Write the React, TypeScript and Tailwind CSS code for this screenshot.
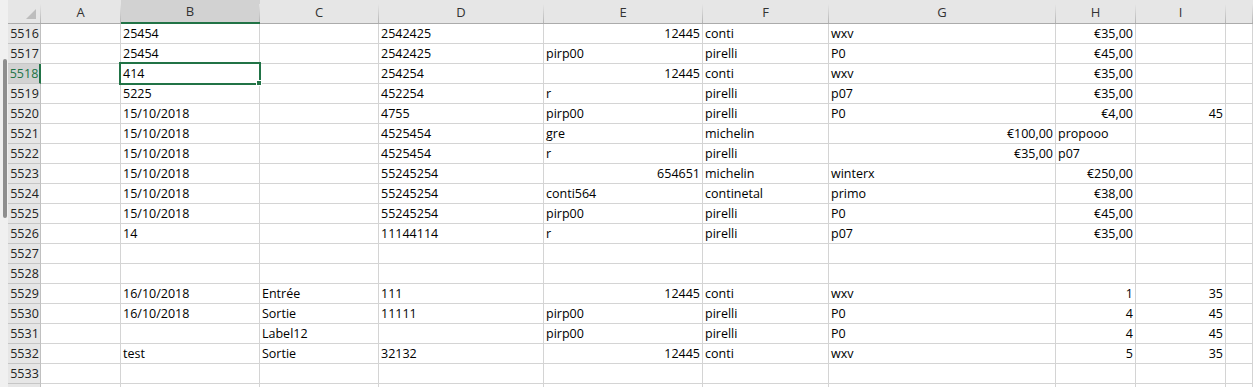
import React from "react";

type Cell = string | { v: string; r: true } | null;

const R = (v: string): Cell => ({ v, r: true });

const cols = ["A", "B", "C", "D", "E", "F", "G", "H", "I", ""];
const widths = ["w-[80px]", "w-[139px]", "w-[119px]", "w-[165px]", "w-[159px]", "w-[126px]", "w-[227px]", "w-[80px]", "w-[90px]", "flex-1"];

const rows: { n: number | null; c: Cell[] }[] = [
  { n: 5516, c: [null, "25454", null, "2542425", R("12445"), "conti", "wxv", R("€35,00"), null, null] },
  { n: 5517, c: [null, "25454", null, "2542425", "pirp00", "pirelli", "P0", R("€45,00"), null, null] },
  { n: 5518, c: [null, "414", null, "254254", R("12445"), "conti", "wxv", R("€35,00"), null, null] },
  { n: 5519, c: [null, "5225", null, "452254", "r", "pirelli", "p07", R("€35,00"), null, null] },
  { n: 5520, c: [null, "15/10/2018", null, "4755", "pirp00", "pirelli", "P0", R("€4,00"), R("45"), null] },
  { n: 5521, c: [null, "15/10/2018", null, "4525454", "gre", "michelin", R("€100,00"), "propooo", null, null] },
  { n: 5522, c: [null, "15/10/2018", null, "4525454", "r", "pirelli", R("€35,00"), "p07", null, null] },
  { n: 5523, c: [null, "15/10/2018", null, "55245254", R("654651"), "michelin", "winterx", R("€250,00"), null, null] },
  { n: 5524, c: [null, "15/10/2018", null, "55245254", "conti564", "continetal", "primo", R("€38,00"), null, null] },
  { n: 5525, c: [null, "15/10/2018", null, "55245254", "pirp00", "pirelli", "P0", R("€45,00"), null, null] },
  { n: 5526, c: [null, "14", null, "11144114", "r", "pirelli", "p07", R("€35,00"), null, null] },
  { n: 5527, c: [null, null, null, null, null, null, null, null, null, null] },
  { n: 5528, c: [null, null, null, null, null, null, null, null, null, null] },
  { n: 5529, c: [null, "16/10/2018", "Entrée", "111", R("12445"), "conti", "wxv", R("1"), R("35"), null] },
  { n: 5530, c: [null, "16/10/2018", "Sortie", "11111", "pirp00", "pirelli", "P0", R("4"), R("45"), null] },
  { n: 5531, c: [null, null, "Label12", null, "pirp00", "pirelli", "P0", R("4"), R("45"), null] },
  { n: 5532, c: [null, "test", "Sortie", "32132", R("12445"), "conti", "wxv", R("5"), R("35"), null] },
  { n: 5533, c: [null, null, null, null, null, null, null, null, null, null] },
  { n: null, c: [null, null, null, null, null, null, null, null, null, null] },
];

export default function App() {
  return (
    <div
      className="flex w-[1253px] h-[387px] overflow-hidden bg-white text-black"
      style={{ fontFamily: '"Open Sans", "Noto Sans", sans-serif' }}
    >
      {/* left strip with scroll thumb */}
      <div className="w-[8px] shrink-0 bg-[#f0f0f0] pt-[59px]">
        <div className="ml-[3px] h-[159px] w-[4px] rounded-full bg-[#8e8e8e]" />
      </div>

      <div className="relative flex-1 flex flex-col">
        {/* header row */}
        <div className="flex h-[24px] shrink-0 bg-[#e6e6e6]">
          <div className="w-[33px] shrink-0 flex border-b border-[#ababab]">
            <div className="flex-1 flex items-end justify-end pb-[3px] pr-[3px]">
              <svg width="11" height="11" viewBox="0 0 11 11">
                <polygon points="10,0 10,10 0,10" fill="#bdbdbd" />
              </svg>
            </div>
            <div className="w-px mt-[4px] bg-[linear-gradient(to_bottom,#e6e6e6,#b5b5b5)]" />
          </div>
          {cols.map((c, i) => (
            <div
              key={c + i}
              className={`${widths[i]} shrink-0 flex ${
                c === "B" ? "bg-[#d2d2d2] border-b-2 border-[#217346]" : "border-b border-[#ababab]"
              }`}
            >
              <div className="flex-1 flex items-center justify-center text-[13px] leading-none text-[#333] pt-[1px]">
                {c}
              </div>
              <div className="w-px mt-[4px] bg-[linear-gradient(to_bottom,#e6e6e6,#b5b5b5)]" />
            </div>
          ))}
        </div>

        {/* rows */}
        {rows.map((row, ri) => {
          const sel = row.n === 5518;
          return (
            <div key={ri} className="flex h-[20px] shrink-0">
              <div
                className={`w-[33px] shrink-0 flex items-center justify-center text-[12.5px] leading-[20px] border-b border-[#c6c6c6] ${
                  sel
                    ? "bg-[#d2d2d2] text-[#217346] border-r-2 border-r-[#217346]"
                    : "bg-[#e6e6e6] text-[#222] border-r border-r-[#c0c0c0]"
                }`}
              >
                <span className="pl-[1px]">{row.n ?? ""}</span>
              </div>
              {row.c.map((cell, i) => {
                const right = cell !== null && typeof cell === "object";
                const text = cell === null ? "" : typeof cell === "string" ? cell : cell.v;
                return (
                  <div
                    key={i}
                    className={`${widths[i]} shrink-0 border-r border-b border-[#d4d4d4] px-[2px] text-[12.5px] leading-[20px] whitespace-nowrap overflow-visible ${
                      right ? "text-right" : "text-left"
                    }`}
                  >
                    {text}
                  </div>
                );
              })}
            </div>
          );
        })}

        {/* selection box on B5518 */}
        <div className="absolute left-[111px] top-[62px] w-[142px] h-[23px] border-2 border-[#217346] pointer-events-none" />
        <div className="absolute left-[248px] top-[80px] w-[6px] h-[6px] bg-[#217346] border border-white pointer-events-none" />
      </div>
    </div>
  );
}
